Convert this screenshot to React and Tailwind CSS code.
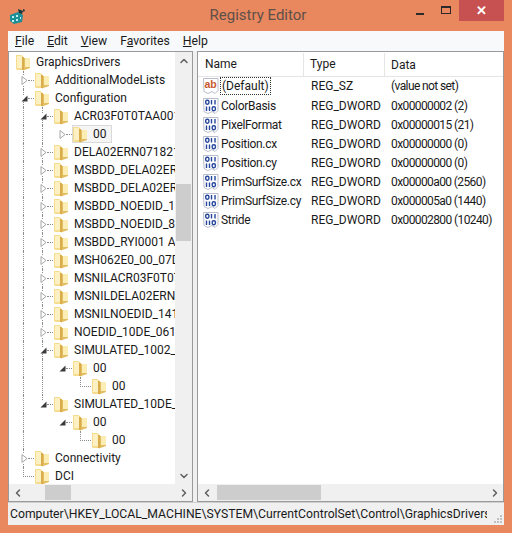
import React from "react";
import { ChevronUp, ChevronDown, ChevronLeft, ChevronRight } from "lucide-react";

const font = "font-['Roboto','Open_Sans',sans-serif]";

// d: depth, t: label, x: expander ("open" | "closed"), g: columns with a dotted guide, stop: guide column ending at this row
const tree = [
  { d: 0, t: "GraphicsDrivers" },
  { d: 1, t: "AdditionalModeLists", x: "closed", g: [0] },
  { d: 1, t: "Configuration", x: "open", g: [0] },
  { d: 2, t: "ACR03F0T0TAA001", x: "open", g: [0, 1] },
  { d: 3, t: "00", x: "closed", g: [0, 1], sel: true },
  { d: 2, t: "DELA02ERN0718210", x: "closed", g: [0, 1] },
  { d: 2, t: "MSBDD_DELA02ERN", x: "closed", g: [0, 1] },
  { d: 2, t: "MSBDD_DELA02ERN", x: "closed", g: [0, 1] },
  { d: 2, t: "MSBDD_NOEDID_14", x: "closed", g: [0, 1] },
  { d: 2, t: "MSBDD_NOEDID_80", x: "closed", g: [0, 1] },
  { d: 2, t: "MSBDD_RYI0001 AC", x: "closed", g: [0, 1] },
  { d: 2, t: "MSH062E0_00_07DD", x: "closed", g: [0, 1] },
  { d: 2, t: "MSNILACR03F0T0T", x: "closed", g: [0, 1] },
  { d: 2, t: "MSNILDELA02ERN0", x: "closed", g: [0, 1] },
  { d: 2, t: "MSNILNOEDID_141", x: "closed", g: [0, 1] },
  { d: 2, t: "NOEDID_10DE_0611", x: "closed", g: [0, 1] },
  { d: 2, t: "SIMULATED_1002_6", x: "open", g: [0, 1] },
  { d: 3, t: "00", x: "open", g: [0, 1] },
  { d: 4, t: "00", g: [0, 1], elbow: true },
  { d: 2, t: "SIMULATED_10DE_", x: "open", g: [0], stop: 1 },
  { d: 3, t: "00", x: "open", g: [0] },
  { d: 4, t: "00", g: [0], elbow: true },
  { d: 1, t: "Connectivity", x: "closed", g: [0] },
  { d: 1, t: "DCI", elbow: true },
];

const values = [
  ["(Default)", "REG_SZ", "(value not set)", "sz"],
  ["ColorBasis", "REG_DWORD", "0x00000002 (2)"],
  ["PixelFormat", "REG_DWORD", "0x00000015 (21)"],
  ["Position.cx", "REG_DWORD", "0x00000000 (0)"],
  ["Position.cy", "REG_DWORD", "0x00000000 (0)"],
  ["PrimSurfSize.cx", "REG_DWORD", "0x00000a00 (2560)"],
  ["PrimSurfSize.cy", "REG_DWORD", "0x000005a0 (1440)"],
  ["Stride", "REG_DWORD", "0x00002800 (10240)"],
];

function Folder() {
  return (
    <svg width="14" height="17" viewBox="0 0 14 17" className="shrink-0">
      <path d="M0 1h5l2 1v14H1l-1-1z" fill="#f6dc8e" />
      <path d="M1 2h4l1 1v11H1z" fill="#fdf1c4" />
      <path d="M7 4h7v10l-7 2.5z" fill="#e3bd62" />
      <path d="M9 4h5v9H9z" fill="#fbedb4" />
      <path d="M6 3h2v13H6z" fill="#d9ac4c" />
    </svg>
  );
}

function Expander({ kind }) {
  if (kind === "open")
    return (
      <svg width="7" height="7" viewBox="0 0 7 7" className="block">
        <path d="M6.5 0.5v6h-6z" fill="#3a3a3a" />
      </svg>
    );
  return (
    <svg width="7" height="9" viewBox="0 0 7 9" className="block">
      <path d="M1 .5l5 4-5 4z" fill="#fff" stroke="#a6a6a6" />
    </svg>
  );
}

function TreeRow({ row }) {
  const indent = row.d === 0 ? 0 : (row.d - 1) * 19 + 6;
  return (
    <div className="relative flex h-[18px] items-center" style={{ paddingLeft: indent }}>
      {row.g?.map((c) => (
        <span
          key={c}
          className="absolute top-0 bottom-0 border-l border-dotted border-[#8c8c8c]"
          style={{ left: c * 19 + 14 }}
        />
      ))}
      {row.stop && (
        <span
          className="absolute top-0 h-[5px] border-l border-dotted border-[#8c8c8c]"
          style={{ left: row.stop * 19 + 14 }}
        />
      )}
      <span className={`relative flex h-[18px] shrink-0 items-center ${row.d === 0 ? "w-[7px]" : "w-[20px]"}`}>
        {row.d > 0 && !row.elbow && <span className="absolute left-[13px] w-[6px] border-t border-dotted border-[#8c8c8c]" />}
        {row.elbow && (
          <span className="absolute left-[8px] top-0 h-[10px] w-[11px] border-b border-l border-dotted border-[#8c8c8c]" />
        )}
        {row.x && (
          <span className="relative ml-[5px] flex w-[8px] justify-center bg-white">
            <Expander kind={row.x} />
          </span>
        )}
      </span>
      <span className={`flex h-[18px] items-center gap-[6px] ${row.sel ? "-ml-[1px] border border-[#d9d9d9] bg-[#f5f5f5] pr-[4px]" : "bg-white"}`}>
        <Folder />
        <span className="whitespace-nowrap text-[#1a1a1a]">{row.t}</span>
      </span>
    </div>
  );
}

function RegIcon({ sz }) {
  return (
    <svg width="16" height="16" viewBox="0 0 16 16" className="shrink-0">
      <path d="M.5.5h14.5v12l-3 3-3-2-4 2-4-2z" fill="#fff" stroke="#b9bccb" />
      {sz ? (
        <text x="1.5" y="10" fontSize="10.5" fontWeight="700" fill="#c9572c" fontFamily="Liberation Sans">ab</text>
      ) : (
        <g fill="none" stroke="#27479c" strokeWidth="1.4">
          <rect x="2.7" y="2.2" width="3.2" height="4" rx="1.4" />
          <path d="M8.5 2v4.5M12 2v4.5" />
          <path d="M3.5 8.5v4.5M6.5 8.5v4.5" />
          <rect x="9.2" y="8.7" width="3.2" height="4" rx="1.4" />
        </g>
      )}
    </svg>
  );
}

function HScroll({ left, thumb }) {
  return (
    <div className="flex h-[17px] items-center bg-[#f0f0f0] text-[#606060]">
      <span className="flex w-[17px] shrink-0 justify-center"><ChevronLeft size={12} strokeWidth={3} /></span>
      <div className="flex-1 self-stretch py-[1px]">
        <div className="h-full bg-[#cdcdcd]" style={{ marginLeft: left, width: thumb }} />
      </div>
      <span className="flex w-[17px] shrink-0 justify-center"><ChevronRight size={12} strokeWidth={3} /></span>
    </div>
  );
}

export default function App() {
  return (
    <div className={`${font} flex h-[533px] w-[512px] flex-col overflow-hidden bg-[#e9875f] text-[12px] leading-none text-[#1a1a1a]`}>
      {/* title bar */}
      <div className="relative flex h-[31px] shrink-0 items-center justify-center pl-[4px]">
        <svg width="17" height="17" viewBox="0 0 17 17" className="absolute left-[9px] top-[8px]">
          <path d="M1 7l8-3 5 3-1 7-8 2-4-3z" fill="#1d8f96" />
          <path d="M3 8h2v2H3zM7 7h2v2H7zM3 12h2v2H3zM7 11h2v2H7zM11 9h1v2h-1z" fill="#bfeff0" />
          <path d="M9 1l5 2-1 3-3-1zM14 1l2 1-1 2-1-1z" fill="#16343a" />
        </svg>
        <span className="text-[15px] text-[#5f5048]">Registry Editor</span>
        <div className="absolute right-[8px] top-0 flex items-start">
          <span className="flex h-[21px] w-[26px] items-center justify-center pt-[6px]"><span className="h-[2px] w-[8px] bg-[#2a2a2a]" /></span>
          <span className="flex h-[21px] w-[26px] items-center justify-center pb-[2px]"><span className="h-[8px] w-[10px] border border-t-2 border-[#2a2a2a]" /></span>
          <span className="flex h-[21px] w-[45px] items-center justify-center bg-[#c75050] text-[13px] font-bold text-white">✕</span>
        </div>
      </div>

      <div className="mx-[8px] flex min-h-0 flex-1 flex-col bg-[#f0f0f0]">
        {/* menu */}
        <div className="flex h-[20px] shrink-0 items-center gap-[13px] bg-[#f8f9fa] pl-[7px] text-[12.2px]">
          <span><u>F</u>ile</span>
          <span><u>E</u>dit</span>
          <span><u>V</u>iew</span>
          <span>F<u>a</u>vorites</span>
          <span><u>H</u>elp</span>
        </div>

        <div className="flex min-h-0 flex-1 gap-[4px]">
          {/* tree */}
          <div className="flex w-[185px] flex-col border border-[#9a9a9a] bg-white">
            <div className="flex min-h-0 flex-1">
              <div className="min-w-0 flex-1 overflow-hidden pt-[1px]">
                {tree.map((row, i) => (
                  <TreeRow key={i} row={row} />
                ))}
              </div>
              <div className="flex w-[17px] shrink-0 flex-col bg-[#f0f0f0] text-[#606060]">
                <span className="flex h-[17px] items-center justify-center"><ChevronUp size={12} strokeWidth={3} /></span>
                <div className="flex-1 px-[1px] pt-[115px]">
                  <div className="h-[57px] bg-[#cdcdcd]" />
                </div>
                <span className="flex h-[17px] items-center justify-center"><ChevronDown size={12} strokeWidth={3} /></span>
              </div>
            </div>
            <HScroll left={19} thumb={26} />
          </div>

          {/* values */}
          <div className="flex min-w-0 flex-1 flex-col border border-[#9a9a9a] bg-white">
            <div className="min-h-0 flex-1 overflow-hidden">
              <div className="flex h-[25px] items-center border-b border-[#e5e5e5] pt-[1px]">
                <span className="w-[106px] shrink-0 border-r border-[#e5e5e5] pl-[7px] leading-[23px]">Name</span>
                <span className="w-[81px] shrink-0 border-r border-[#e5e5e5] pl-[6px] leading-[23px]">Type</span>
                <span className="pl-[6px]">Data</span>
              </div>
              {values.map(([n, t, v, kind], i) => (
                <div key={n} className={`flex h-[19px] items-center whitespace-nowrap ${i === 0 ? "pb-[1px]" : ""}`}>
                  <span className="flex w-[106px] shrink-0 items-center gap-[1px] pl-[5px]">
                    <RegIcon sz={kind === "sz"} />
                    <span className={i === 0 ? "border border-dotted border-[#333] px-[1px] py-[2px]" : "pl-[1px] tracking-[-0.3px]"}>{n}</span>
                  </span>
                  <span className="w-[81px] shrink-0 pl-[7px]">{t}</span>
                  <span className="pl-[6px] tracking-[-0.6px]">{v}</span>
                </div>
              ))}
            </div>
            <HScroll left={2} thumb={104} />
          </div>
        </div>

        {/* status bar */}
        <div className="relative flex h-[23px] shrink-0 items-center overflow-hidden whitespace-nowrap border-t border-[#d0d0d0] pl-[2px] pr-[17px] text-[12.2px]">
          <span className="block overflow-hidden">Computer\HKEY_LOCAL_MACHINE\SYSTEM\CurrentControlSet\Control\GraphicsDrivers\Configuration</span>
          <span className="absolute right-[2px] bottom-[2px] grid grid-cols-3 gap-[1px]">
            <i /><i /><i className="h-[2px] w-[2px] bg-[#c0c0c0]" />
            <i /><i className="h-[2px] w-[2px] bg-[#c0c0c0]" /><i className="h-[2px] w-[2px] bg-[#c0c0c0]" />
            <i className="h-[2px] w-[2px] bg-[#c0c0c0]" /><i className="h-[2px] w-[2px] bg-[#c0c0c0]" /><i className="h-[2px] w-[2px] bg-[#c0c0c0]" />
          </span>
        </div>
      </div>
      <div className="h-[8px] shrink-0" />
    </div>
  );
}
